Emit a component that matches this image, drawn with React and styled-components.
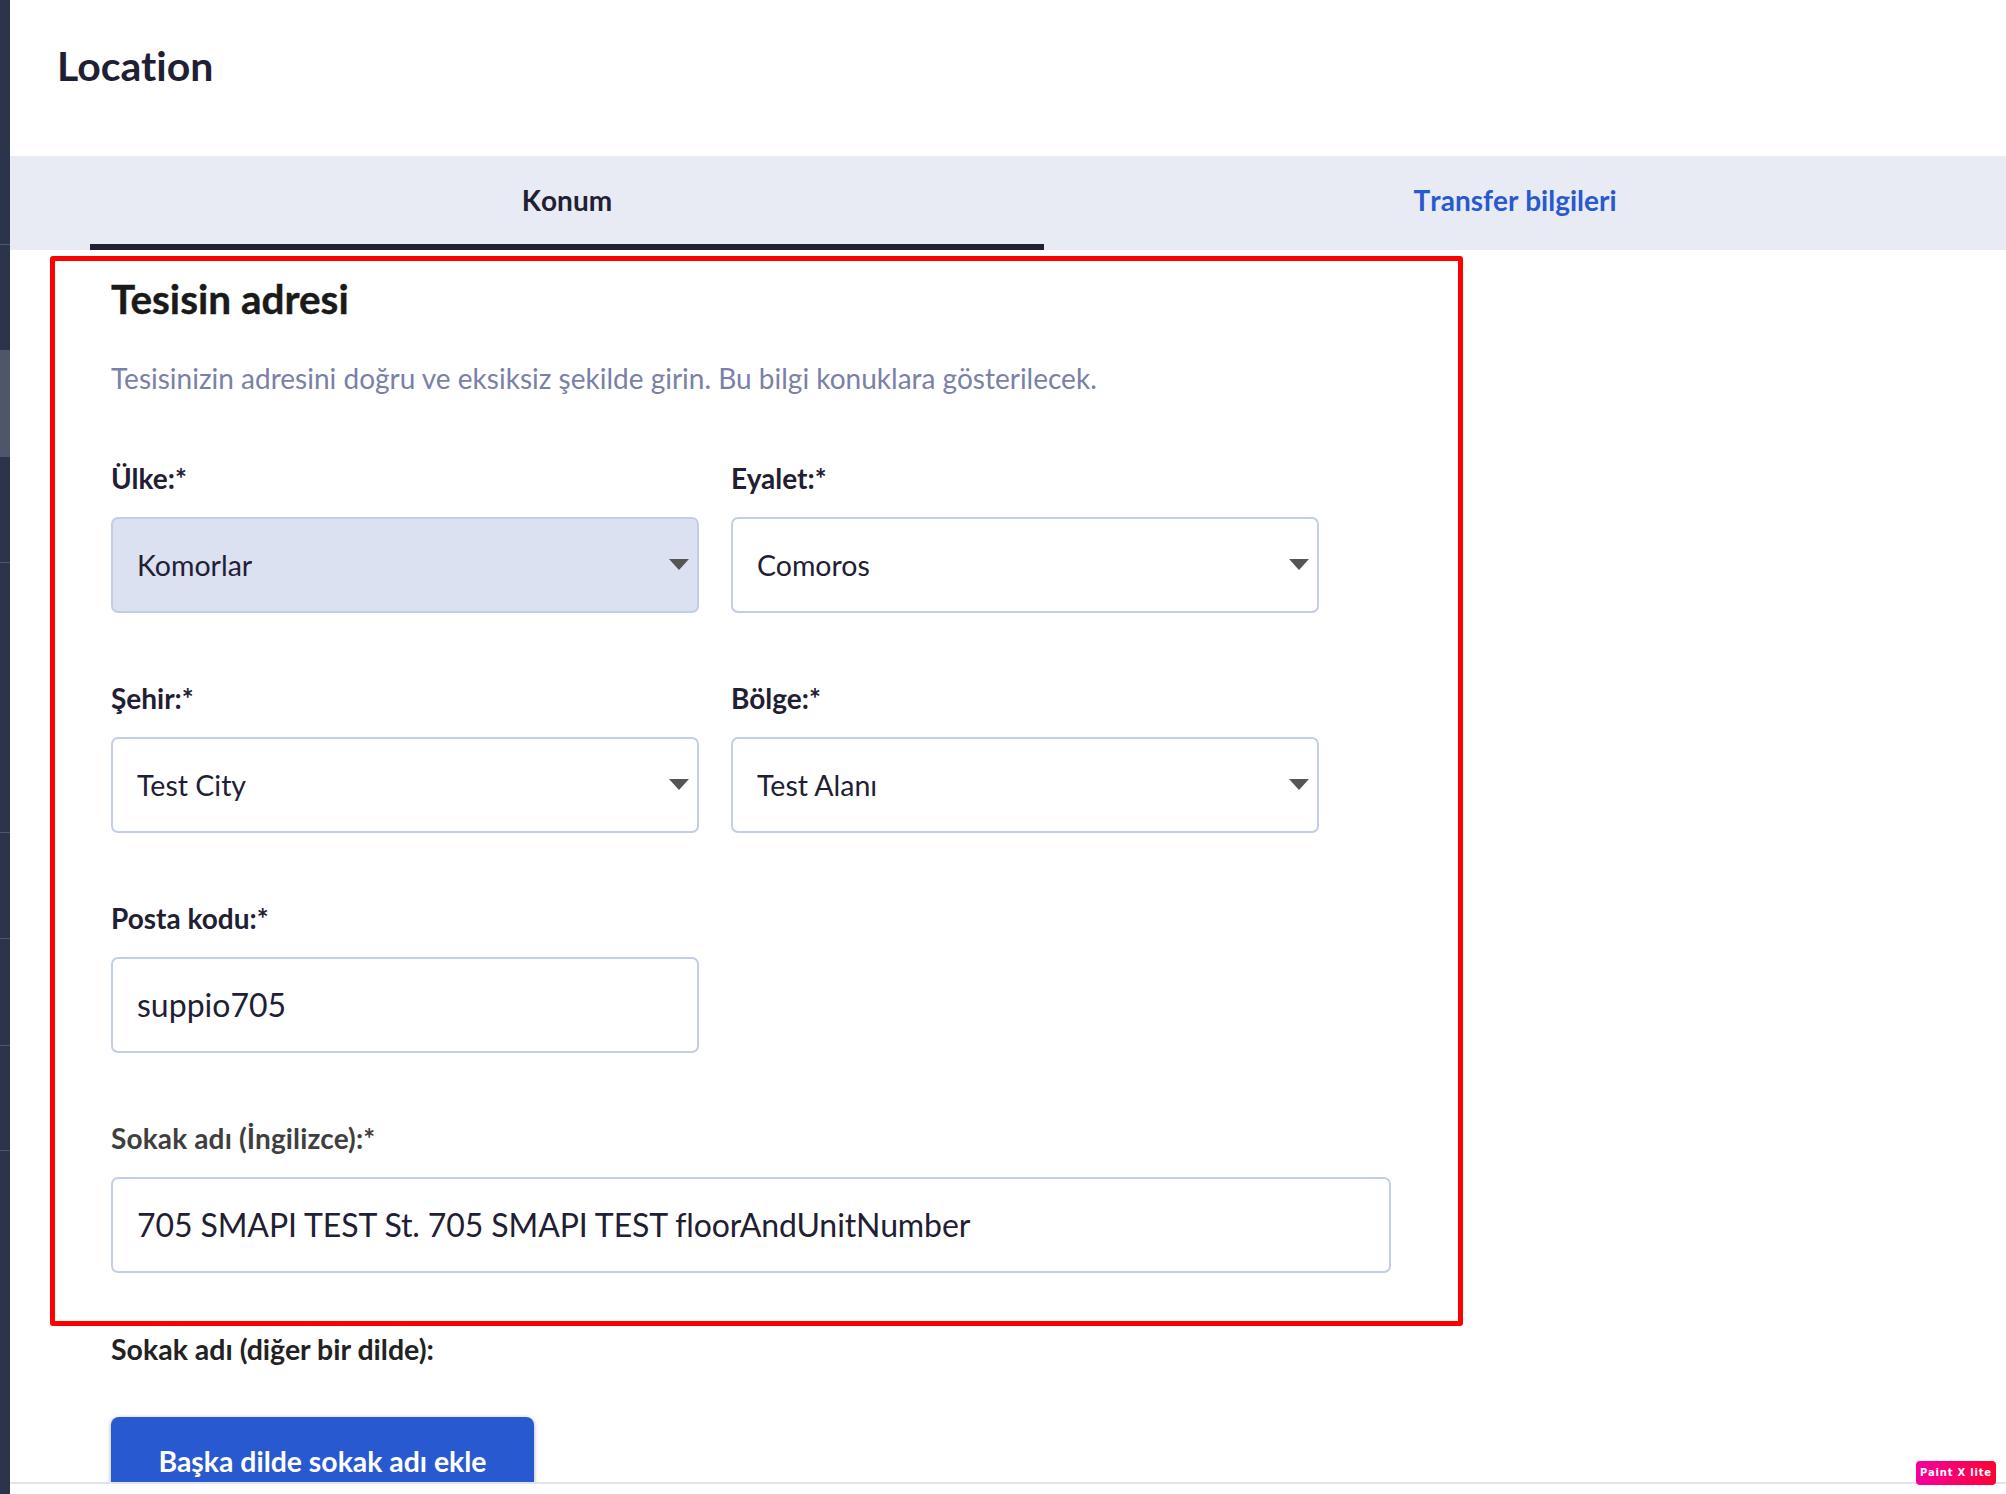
import styled, { createGlobalStyle } from 'styled-components';

const GlobalStyle = createGlobalStyle`
  html, body {
    margin: 0;
    padding: 0;
    background: #fff;
  }
  body {
    font-family: Lato, "Noto Sans", sans-serif;
    color: #1f2033;
  }
`

const Page = styled.div`
  position: relative;
  display: flex;
  width: 2006px;
  height: 1494px;
  overflow: hidden;
`

const Rail = styled.div`
  flex: none;
  width: 10px;
  background: #2b344a;
  display: flex;
  flex-direction: column;
`

const RailItem = styled.div`
  height: ${({ size }) => size}px;
  flex: none;
  background: ${({ $active }) => $active ? '#4f566b' : 'transparent'};
  border-bottom: ${({ $line }) => $line ? '1px solid #4e5670' : 'none'};
  box-sizing: border-box;
`

const Main = styled.div`
  flex: 1;
  min-width: 0;
  display: flex;
  flex-direction: column;
`

const Scroller = styled.div`
  flex: 1;
  min-height: 0;
  overflow: hidden;
`

const Title = styled.h1`
  margin: 0;
  height: 156px;
  padding: 42px 0 0 47px;
  box-sizing: border-box;
  font-size: 41px;
  line-height: 48px;
  font-weight: 700;
  font-variant-ligatures: none;
  color: #1f2033;
`

const Tabs = styled.div`
  display: flex;
  height: 94px;
  padding: 0 20px 0 80px;
  background: #e8ebf4;
`

const Tab = styled.div`
  flex: none;
  width: ${({ size }) => size}px;
  box-sizing: border-box;
  padding-top: 27px;
  text-align: center;
  font-size: 28px;
  line-height: 34px;
  font-weight: 700;
  font-kerning: none;
  color: ${({ $active }) => $active ? '#1f2033' : '#2859d0'};
  border-bottom: ${({ $active }) => $active ? '6px solid #1f2033' : 'none'};
`

const Highlight = styled.section`
  width: 1413px;
  height: 1070px;
  margin: 6px 0 0 40px;
  padding: 14px 0 0 56px;
  box-sizing: border-box;
  border: 5px solid #ff0000;
  border-radius: 3px;
`

const Heading = styled.h2`
  margin: 0;
  font-size: 40.5px;
  line-height: 48px;
  font-weight: 700;
  -webkit-text-stroke: .4px #1a1a1a;
  color: #1a1a1a;
`

const Description = styled.p`
  margin: 38px 0 0;
  font-size: 28px;
  line-height: 34px;
  color: #7a80a8;
`

const Grid = styled.div`
  display: grid;
  grid-template-columns: 588px 588px;
  column-gap: 32px;
  row-gap: 68px;
  margin-top: 66px;
`

const Field = styled.div`
  grid-column: ${({ $wide }) => $wide ? '1 / -1' : 'auto'};
  width: ${({ $wide }) => $wide ? '1280px' : 'auto'};
`

const Label = styled.label`
  display: block;
  margin-bottom: 22px;
  font-size: 28px;
  line-height: 34px;
  font-weight: 700;
  letter-spacing: ${({ $muted }) => $muted ? '.15px' : '0'};
  color: ${({ $muted }) => $muted ? '#3f3f3f' : '#1f2033'};
`

const SelectWrap = styled.div`
  position: relative;
  &::after {
    content: '';
    position: absolute;
    top: 42px;
    right: 10px;
    border-left: 10px solid transparent;
    border-right: 10px solid transparent;
    border-top: 11px solid #555;
  }
`

const Select = styled.select`
  display: block;
  width: 100%;
  height: 96px;
  padding: 0 24px;
  box-sizing: border-box;
  appearance: none;
  border: 2px solid #c2cde6;
  border-radius: 7px;
  background: ${({ $filled }) => $filled ? '#dbe1f1' : '#fff'};
  font-family: inherit;
  font-size: 28.5px;
  color: #1f2033;
`

const Input = styled.input`
  display: block;
  width: 100%;
  height: 96px;
  padding: 0 24px 2px;
  box-sizing: border-box;
  border: 2px solid #c2cde6;
  border-radius: 7px;
  background: #fff;
  font-family: inherit;
  font-size: 32px;
  letter-spacing: ${({ $tight }) => $tight ? '-.1px' : '0'};
  color: #1f2033;
`

const Below = styled.div`
  padding: 6px 0 0 101px;
`

const PlainLabel = styled.div`
  font-size: 28.5px;
  line-height: 34px;
  font-weight: 700;
  color: #222;
`

const AddButton = styled.button`
  display: block;
  width: 423px;
  height: 96px;
  margin-top: 51px;
  padding: 0 0 8px;
  border: none;
  border-radius: 8px;
  background: #2859d0;
  box-shadow: 0 1px 4px rgba(0, 0, 0, .35);
  font-family: inherit;
  font-size: 28.4px;
  font-weight: 700;
  color: #fff;
`

const BottomBar = styled.div`
  flex: none;
  height: 12px;
  background: #fff;
  border-top: 2px solid #dfe4ee;
  box-sizing: border-box;
`

const Badge = styled.div`
  position: absolute;
  left: 1916px;
  top: 1461px;
  width: 80px;
  height: 24px;
  border-radius: 4px;
  background: linear-gradient(90deg, #f400a0, #ff0033);
  font-family: "DejaVu Sans", sans-serif;
  font-size: 10px;
  line-height: 24px;
  font-weight: 700;
  letter-spacing: .8px;
  text-align: center;
  color: #fff;
`

const railItems = [
  { size: 245, line: true },
  { size: 105 },
  { size: 107, active: true },
  { size: 106, line: true },
  { size: 270, line: true },
  { size: 106, line: true },
  { size: 107, line: true },
  { size: 105, line: true },
]

const App = () => {
  return (
    <Page>
      <GlobalStyle />
      <Rail>
        {railItems.map((item, i) => (
          <RailItem key={i} size={item.size} $line={item.line} $active={item.active} />
        ))}
      </Rail>
      <Main>
        <Scroller>
          <Title>Location</Title>
          <Tabs>
            <Tab $active size={954}>Konum</Tab>
            <Tab size={942}>Transfer bilgileri</Tab>
          </Tabs>
          <Highlight>
            <Heading>Tesisin adresi</Heading>
            <Description>Tesisinizin adresini doğru ve eksiksiz şekilde girin. Bu bilgi konuklara gösterilecek.</Description>
            <Grid>
              <Field>
                <Label>Ülke:*</Label>
                <SelectWrap>
                  <Select $filled defaultValue="Komorlar"><option>Komorlar</option></Select>
                </SelectWrap>
              </Field>
              <Field>
                <Label>Eyalet:*</Label>
                <SelectWrap>
                  <Select defaultValue="Comoros"><option>Comoros</option></Select>
                </SelectWrap>
              </Field>
              <Field>
                <Label>Şehir:*</Label>
                <SelectWrap>
                  <Select defaultValue="Test City"><option>Test City</option></Select>
                </SelectWrap>
              </Field>
              <Field>
                <Label>Bölge:*</Label>
                <SelectWrap>
                  <Select defaultValue="Test Alanı"><option>Test Alanı</option></Select>
                </SelectWrap>
              </Field>
              <Field>
                <Label>Posta kodu:*</Label>
                <Input readOnly value="suppio705" />
              </Field>
              <div />
              <Field $wide>
                <Label $muted>Sokak adı (İngilizce):*</Label>
                <Input $tight readOnly value="705 SMAPI TEST St. 705 SMAPI TEST floorAndUnitNumber" />
              </Field>
            </Grid>
          </Highlight>
          <Below>
            <PlainLabel>Sokak adı (diğer bir dilde):</PlainLabel>
            <AddButton>Başka dilde sokak adı ekle</AddButton>
          </Below>
        </Scroller>
        <BottomBar />
      </Main>
      <Badge>Paint X lite</Badge>
    </Page>
  );
}

export default App;
